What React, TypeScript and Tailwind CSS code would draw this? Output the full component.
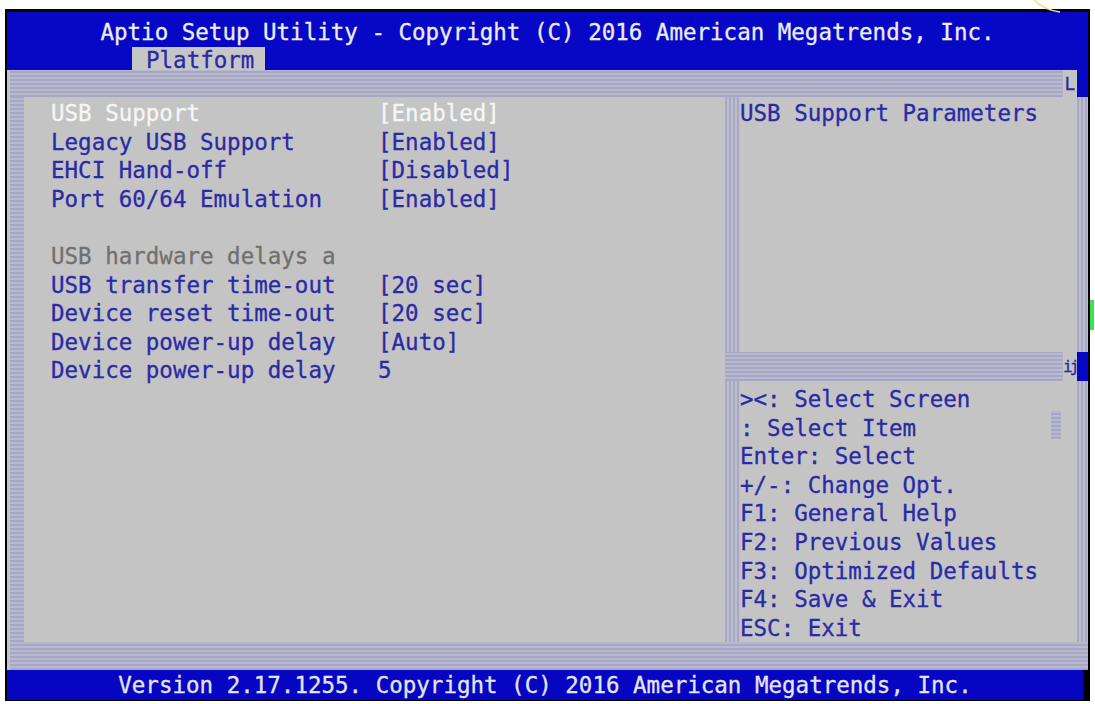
import React from "react";

const hatchH =
  "bg-[repeating-linear-gradient(0deg,#a6a6c6_0px,#a6a6c6_2px,#b9b9cc_2px,#b9b9cc_4px)]";
const hatchV =
  "bg-[repeating-linear-gradient(90deg,#a8a8c6_0px,#a8a8c6_2px,#bdbdcd_2px,#bdbdcd_4px)]";

const rows: { label: string; value: string; kind: "hi" | "blue" | "gray" | "blank" }[] = [
  { label: "USB Support", value: "[Enabled]", kind: "hi" },
  { label: "Legacy USB Support", value: "[Enabled]", kind: "blue" },
  { label: "EHCI Hand-off", value: "[Disabled]", kind: "blue" },
  { label: "Port 60/64 Emulation", value: "[Enabled]", kind: "blue" },
  { label: "", value: "", kind: "blank" },
  { label: "USB hardware delays a", value: "", kind: "gray" },
  { label: "USB transfer time-out", value: "[20 sec]", kind: "blue" },
  { label: "Device reset time-out", value: "[20 sec]", kind: "blue" },
  { label: "Device power-up delay", value: "[Auto]", kind: "blue" },
  { label: "Device power-up delay", value: "5", kind: "blue" },
];

const help = [
  "><: Select Screen",
  ": Select Item",
  "Enter: Select",
  "+/-: Change Opt.",
  "F1: General Help",
  "F2: Previous Values",
  "F3: Optimized Defaults",
  "F4: Save & Exit",
  "ESC: Exit",
];

export default function App() {
  return (
    <div className="relative w-[1095px] h-[704px] bg-white overflow-hidden font-['DejaVu_Sans_Mono',monospace] text-[22.5px] leading-[28.6px] [-webkit-text-stroke:0.3px_currentColor]">
      {/* photo artifacts */}
      <svg className="absolute left-[1030px] top-0" width="40" height="14" viewBox="0 0 40 14">
        <path d="M4 0 Q14 10 30 12" stroke="#f2e27a" strokeWidth="1.5" fill="none" />
      </svg>
      <div className="absolute left-[1090px] top-[300px] w-[4px] h-[30px] bg-[#3ee05a]" />

      <div className="ml-[5px] mt-[9px] w-[1085px] h-[692px] bg-black pl-[2px] pt-[3px] pr-[2px] pb-[3px] flex flex-col">
        {/* header */}
        <div className="h-[58px] bg-[#0707c6] flex flex-col">
          <div className="pt-[6px] text-center text-[#ececf4] whitespace-pre">
            Aptio Setup Utility - Copyright (C) 2016 American Megatrends, Inc.
          </div>
          <div className="flex mt-auto">
            <div className="ml-[125px] w-[133px] h-[28px] bg-[#c6c6c6] text-[#2a2aa6] pl-[14px] leading-[26px]">
              Platform
            </div>
          </div>
        </div>

        {/* body */}
        <div className="flex-1 bg-[#c4c4c4] flex flex-col">
          {/* top band */}
          <div className="h-[27px] flex bg-[#c4c4c4]">
            <div className="w-[3px]" />
            <div className={`flex-1 ${hatchH}`} />
            <div className="w-[14px] bg-[#c4c4c4] text-[#2a2aa6] text-[18px] leading-[27px] text-center">L</div>
            <div className="w-[11px] bg-[#0707c6]" />
          </div>

          {/* middle */}
          <div className="flex-1 flex">
            <div className="w-[3px]" />
            <div className={`w-[14px] ${hatchH}`} />
            {/* left panel */}
            <div className="w-[701px] pt-[2px] pl-[27px]">
              {rows.map((r, i) => {
                const color =
                  r.kind === "hi" ? "text-[#f6f6f6]" : r.kind === "gray" ? "text-[#707070]" : "text-[#2a2aa6]";
                return (
                  <div key={i} className={`flex h-[28.6px] whitespace-pre ${color}`}>
                    <div className="w-[327px]">{r.label}</div>
                    <div>{r.value}</div>
                  </div>
                );
              })}
            </div>
            {/* right area */}
            <div className="flex-1 flex flex-col">
              <div className="h-[255px] flex">
                <div className={`w-[15px] ${hatchV}`} />
                <div className="flex-1 pt-[2px] text-[#2a2aa6] whitespace-pre">USB Support Parameters</div>
                <div className={`w-[11px] ${hatchV}`} />
              </div>
              <div className="h-[29px] flex">
                <div className={`flex-1 ${hatchH}`} />
                <div className="w-[14px] text-[#2a2aa6] text-[16px] leading-[29px] tracking-[-3px] whitespace-pre">ij</div>
                <div className="w-[11px] bg-[#0707c6]" />
              </div>
              <div className="flex-1 flex">
                <div className={`w-[15px] ${hatchV}`} />
                <div className="relative flex-1 pt-[4px] text-[#2a2aa6] whitespace-pre">
                  {help.map((h) => (
                    <div key={h} className="h-[28.6px]">
                      {h}
                    </div>
                  ))}
                  <div className={`absolute right-[16px] top-[30px] w-[10px] h-[28px] ${hatchH}`} />
                </div>
                <div className={`w-[11px] ${hatchV}`} />
              </div>
            </div>
          </div>

          {/* bottom band */}
          <div className="h-[28px] flex">
            <div className="w-[3px]" />
            <div className={`flex-1 ${hatchH}`} />
          </div>
        </div>

        {/* footer */}
        <div className="h-[30px] bg-[#0505c2] text-center text-[#e4e4f0] leading-[30px] whitespace-pre mr-[5px]">
          Version 2.17.1255. Copyright (C) 2016 American Megatrends, Inc.
        </div>
      </div>
    </div>
  );
}
